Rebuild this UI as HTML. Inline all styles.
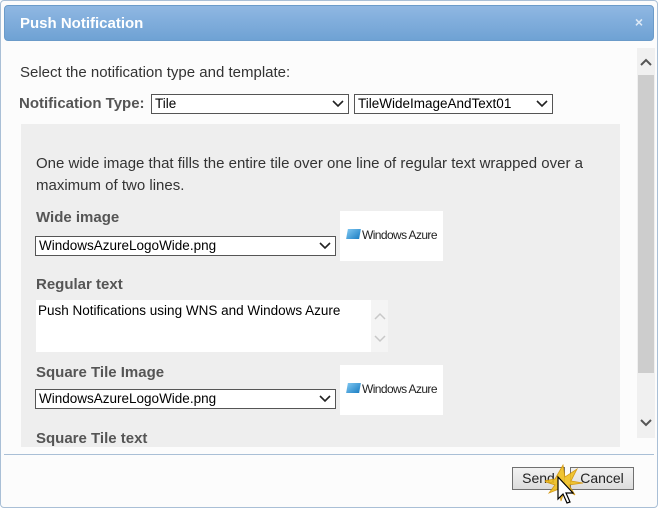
<!DOCTYPE html>
<html><head><style>
*{margin:0;padding:0;box-sizing:border-box}
body{width:658px;height:508px;background:#fff;position:relative;overflow:hidden;font-family:"Liberation Sans",Arial,sans-serif}
.a{position:absolute}
.frame{left:0;top:0;width:658px;height:508px;border:1px solid #a9bfd6;border-radius:4px;background:#fcfcfc}
.title{left:4px;top:5px;width:650px;height:36px;border-radius:4px;background:linear-gradient(#8fb7e2,#6fa2d4);border:1px solid #6b9bc9}
.title span{position:absolute;left:15px;top:9px;color:#fff;font-weight:bold;font-size:15px}
.title i{position:absolute;right:10px;top:8px;color:#dde9f6;font-style:normal;font-weight:bold;font-size:14px}
.t{font-size:15px;color:#333}
.lbl{font-size:15px;color:#555;font-weight:bold}
.sel{background:#fff;border:1px solid #555;height:20px;font-size:13.5px;color:#000;padding:1px 3px;line-height:16px}
.sel svg{position:absolute;right:4px;top:5px}
.logo{background:#fff;width:103px;height:50px}
.logo .ic{position:absolute;left:7px;top:18px;width:13px;height:10px;background:linear-gradient(135deg,#7cc5f0,#1d7fc4);transform:skewX(-10deg)}
.logo .tx{position:absolute;left:22px;top:17px;font-size:12px;letter-spacing:-0.6px;color:#222}
.btn{border:1px solid #707070;background:linear-gradient(#f2f2f2,#dcdcdc);font-size:14px;color:#222;text-align:center;line-height:21px;height:23px}
</style></head><body>
<div class="a frame"></div>
<div class="a title"><span>Push Notification</span><i>×</i></div>
<div class="a t" style="left:20px;top:64px">Select the notification type and template:</div>
<div class="a lbl" style="left:19px;top:95px;font-size:15px">Notification Type:</div>
<div class="a sel" style="left:151px;top:94px;width:198px">Tile<svg width="12" height="8"><path d="M1 1l5 5 5-5" stroke="#222" stroke-width="1.6" fill="none"/></svg></div>
<div class="a sel" style="left:354px;top:94px;width:199px">TileWideImageAndText01<svg width="12" height="8"><path d="M1 1l5 5 5-5" stroke="#222" stroke-width="1.6" fill="none"/></svg></div>
<div class="a" style="left:21px;top:124px;width:599px;height:323px;background:#eeeeee"></div>
<div class="a t" style="left:36px;top:153px;line-height:22px;width:575px">One wide image that fills the entire tile over one line of regular text wrapped over a maximum of two lines.</div>
<div class="a lbl" style="left:36px;top:209px">Wide image</div>
<div class="a sel" style="left:35px;top:236px;width:301px">WindowsAzureLogoWide.png<svg width="12" height="8"><path d="M1 1l5 5 5-5" stroke="#222" stroke-width="1.6" fill="none"/></svg></div>
<div class="a logo" style="left:340px;top:211px"><div class="ic a"></div><div class="tx a">Windows Azure</div></div>
<div class="a lbl" style="left:36px;top:276px">Regular text</div>
<div class="a" style="left:36px;top:300px;width:352px;height:52px;background:#fff"></div>
<div class="a" style="left:371px;top:300px;width:17px;height:52px;background:#f4f4f4"></div>
<svg class="a" style="left:373px;top:312px" width="14" height="32"><path d="M2 7l5-5 5 5M2 24l5 5 5-5" stroke="#c8c8c8" stroke-width="1.5" fill="none"/></svg>
<div class="a" style="left:38px;top:303px;font-size:13.5px;color:#000">Push Notifications using WNS and Windows Azure</div>
<div class="a lbl" style="left:36px;top:364px">Square Tile Image</div>
<div class="a sel" style="left:35px;top:389px;width:301px">WindowsAzureLogoWide.png<svg width="12" height="8"><path d="M1 1l5 5 5-5" stroke="#222" stroke-width="1.6" fill="none"/></svg></div>
<div class="a logo" style="left:340px;top:365px"><div class="ic a"></div><div class="tx a">Windows Azure</div></div>
<div class="a lbl" style="left:36px;top:430px">Square Tile text</div>
<div class="a" style="left:637px;top:48px;width:18px;height:390px;background:#f0f0f0"></div>
<div class="a" style="left:638px;top:75px;width:16px;height:298px;background:#cdcdcd"></div>
<svg class="a" style="left:639px;top:57px" width="14" height="10"><path d="M2 8l5-5 5 5" stroke="#555" stroke-width="2" fill="none"/></svg>
<svg class="a" style="left:639px;top:418px" width="14" height="10"><path d="M2 2l5 5 5-5" stroke="#555" stroke-width="2" fill="none"/></svg>
<div class="a" style="left:4px;top:454px;width:650px;height:1px;background:#a9bfd6"></div>
<div class="a btn" style="left:512px;top:467px;width:53px">Send</div>
<div class="a btn" style="left:570px;top:467px;width:64px">Cancel</div>
<svg class="a" style="left:545px;top:463px" width="40" height="45"><path d="M10 16l8 -14 2 12 12-8-6 12 12 2-14 2 6 10-10-6-4 12-2-12-10 4 6-8-12-4z" fill="#f0c020" stroke="#d09000" stroke-width="0.8" opacity="0.9"/><path d="M13 14v22l5-5 4 9 3-1-4-9h7z" fill="#fff" stroke="#000" stroke-width="1.2"/></svg>
</body></html>
